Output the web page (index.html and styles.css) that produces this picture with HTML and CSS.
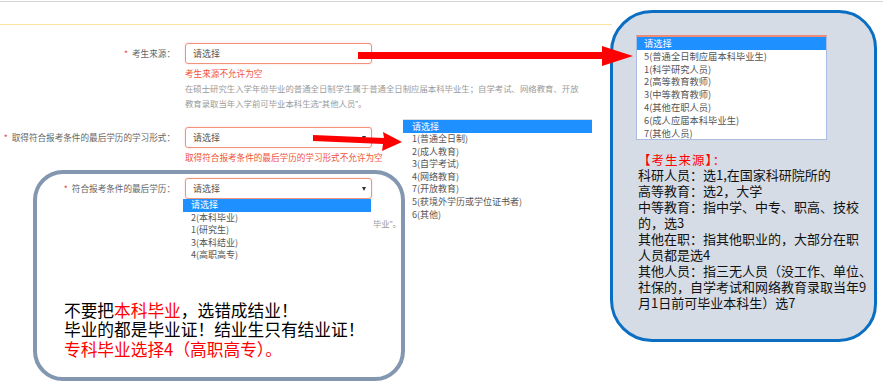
FILE: index.html
```html
<!DOCTYPE html>
<html lang="zh-CN">
<head>
  <meta charset="UTF-8">
  <meta name="viewport" content="width=device-width, initial-scale=1.0">
  <title>报考信息</title>
  <link rel="stylesheet" href="styles.css">
</head>
<body>
  <div class="topline"></div>
  <div class="header"></div>

  <div class="form">
    <div class="row">
      <label class="label"><span class="req">*</span>考生来源：</label>
      <div class="field">
        <div class="select">请选择</div>
        <div class="error">考生来源不允许为空</div>
        <div class="help">在硕士研究生入学年份毕业的普通全日制学生属于普通全日制应届本科毕业生；自学考试、网络教育、开放<br>教育录取当年入学前可毕业本科生选“其他人员”。</div>
      </div>
    </div>

    <div class="row">
      <label class="label"><span class="req">*</span>取得符合报考条件的最后学历的学习形式：</label>
      <div class="field">
        <div class="select">请选择</div>
        <div class="error">取得符合报考条件的最后学历的学习形式不允许为空</div>
      </div>
    </div>

    <div class="row last">
      <label class="label"><span class="req">*</span>符合报考条件的最后学历：</label>
      <div class="field">
        <div class="select">请选择</div>
        <div class="help tail">毕业”。</div>
        <div class="options drop">
          <div class="on">请选择</div>
          <div>2(本科毕业)</div>
          <div>1(研究生)</div>
          <div>3(本科结业)</div>
          <div>4(高职高专)</div>
        </div>
      </div>
    </div>
  </div>

  <!-- 学习形式下拉（截图） -->
  <div class="options form-list">
    <div class="on">请选择</div>
    <div>1(普通全日制)</div>
    <div>2(成人教育)</div>
    <div>3(自学考试)</div>
    <div>4(网络教育)</div>
    <div>7(开放教育)</div>
    <div>5(获境外学历或学位证书者)</div>
    <div>6(其他)</div>
  </div>

  <div class="callout left-note">
    <p>不要把<span class="hl">本科毕业</span>，选错成结业！</p>
    <p>毕业的都是毕业证！结业生只有结业证！</p>
    <p class="hl">专科毕业选择4（高职高专）。</p>
  </div>

  <div class="callout right-note">
    <div class="options source-list">
      <div class="on">请选择</div>
      <div>5(普通全日制应届本科毕业生)</div>
      <div>1(科学研究人员)</div>
      <div>2(高等教育教师)</div>
      <div>3(中等教育教师)</div>
      <div>4(其他在职人员)</div>
      <div>6(成人应届本科毕业生)</div>
      <div>7(其他人员)</div>
    </div>
    <div class="note-title">【考生来源】：</div>
    <div class="note-body">
      科研人员：选1,在国家科研院所的<br>
      高等教育：选2，大学<br>
      中等教育：指中学、中专、职高、技校<br>
      的，选3<br>
      其他在职：指其他职业的，大部分在职<br>
      人员都是选4<br>
      其他人员：指三无人员（没工作、单位、<br>
      社保的，自学考试和网络教育录取当年9<br>
      月1日前可毕业本科生）选7
    </div>
  </div>

  <svg class="arrows" width="883" height="384" viewBox="0 0 883 384">
    <polygon points="358,52 602,52 602,46 633,56 602,66 602,59 358,59" fill="#ff0000"/>
    <polygon points="313,135 384,138 383,132 402,142 382,151 383,144 313,141" fill="#ff0000"/>
  </svg>
</body>
</html>
```

FILE: styles.css
```css
body {
  margin: 0;
  background: #fff;
  color: #555;
  font-family: "Noto Sans CJK SC", "Noto Sans", sans-serif;
  position: relative;
  width: 883px;
  height: 384px;
  overflow: hidden;
}

.topline {
  height: 1px;
  margin-top: 1px;
  background: #d4d4d4;
}

.header {
  width: 612px;
  height: 22px;
  border-bottom: 1px solid #fde3a0;
}

.form {
  padding-top: 18px;
}

.row {
  display: grid;
  grid-template-columns: 185px 187px;
}

.row + .row { margin-top: 15px; }
.row.last { margin-top: 14px; }

.label {
  text-align: right;
  padding-right: 10px;
  font-size: 8.6px;
  line-height: 21px;
  color: #666;
  white-space: nowrap;
}

.req {
  color: #e8463a;
  margin-right: 4px;
}

.field {
  position: relative;
}

.select {
  position: relative;
  height: 21px;
  box-sizing: border-box;
  border: 1px solid #f2917c;
  border-radius: 3px;
  box-shadow: 0 0 2px rgba(240, 120, 100, 0.35);
  padding-left: 7px;
  font-size: 9px;
  line-height: 19px;
  color: #555;
}

.select::after {
  content: "";
  position: absolute;
  right: 5px;
  top: 8px;
  border-left: 2.5px solid transparent;
  border-right: 2.5px solid transparent;
  border-top: 4px solid #333;
}

.error {
  margin-top: 2px;
  font-size: 8.6px;
  line-height: 14px;
  color: #f0533a;
  white-space: nowrap;
}

.help {
  margin-top: 2px;
  font-family: "Liberation Sans", "Noto Sans CJK SC", sans-serif;
  font-size: 8.4px;
  line-height: 15px;
  color: #9a9a9a;
  white-space: nowrap;
}

/* only the end of this line shows past the open list */
.help.tail {
  margin-top: 18px;
  padding-left: 188px;
}

/* open select lists */
.options {
  background: #fff;
  font-size: 9px;
  color: #555;
}

.options div {
  line-height: 12.6px;
  padding-left: 8px;
  white-space: nowrap;
}

.options .on {
  background: #1e90ff;
  color: #fff;
}

.drop {
  position: absolute;
  top: 21px;
  left: -2px;
  width: 188px;
}

.form-list {
  position: absolute;
  left: 403px;
  top: 119px;
  width: 189px;
  border-top: 1px solid #dcdcdc;
}

.form-list div { padding-left: 9px; }
.form-list .on { line-height: 13px; }

/* annotation boxes */
.callout {
  position: absolute;
  box-sizing: border-box;
}

.left-note {
  left: 33px;
  top: 170px;
  width: 372px;
  height: 211px;
  border: 4px solid #8497b0;
  border-radius: 30px;
  display: flex;
  flex-direction: column;
  justify-content: flex-end;
  padding: 0 0 18px 27px;
  font-size: 16.7px;
  line-height: 19.5px;
  color: #000;
}

.left-note p {
  margin: 0;
  white-space: nowrap;
}

.hl { color: #ff0000; }

.right-note {
  left: 610px;
  top: 10px;
  width: 267px;
  height: 332px;
  border: 3px solid #0a6fc2;
  border-radius: 42px 38px 38px 42px;
  background: #d6dce5;
  padding: 22px 0 0 23px;
}

.source-list {
  width: 191px;
  box-sizing: border-box;
  border: 1px solid #a9bde0;
  border-top: 2px solid #ef8a74;
  font-size: 9.3px;
}

.source-list div {
  line-height: 12.8px;
  padding-left: 7px;
}

.note-title {
  margin-top: 13px;
  padding-left: 2px;
  font-size: 12.5px;
  line-height: 14px;
  letter-spacing: 1px;
  color: #ff0000;
}

.note-body {
  padding-left: 2px;
  font-size: 13px;
  line-height: 15.9px;
  color: #111;
  white-space: nowrap;
}

.arrows {
  position: absolute;
  left: 0;
  top: 0;
  pointer-events: none;
}
```
